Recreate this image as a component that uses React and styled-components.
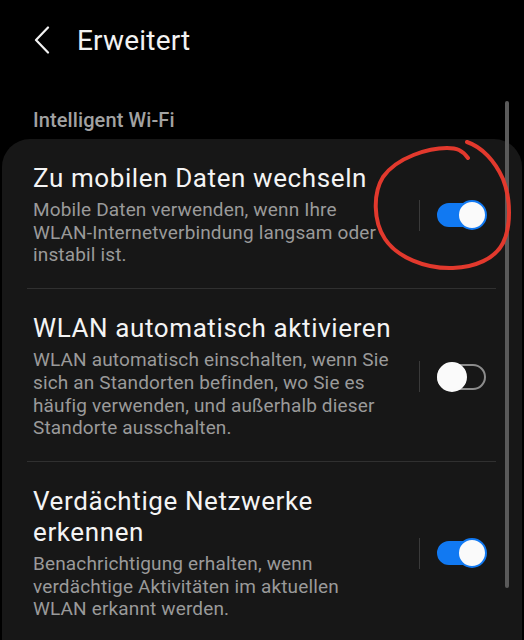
import styled, { createGlobalStyle } from "styled-components";

const GlobalStyle = createGlobalStyle`
  html, body {
    margin: 0;
    padding: 0;
    background: #000;
  }
  body {
    font-family: Roboto, "Noto Sans", "Liberation Sans", sans-serif;
    -webkit-font-smoothing: antialiased;
  }
`;

// lines are kept as they wrap on the device
const settings = [
  {
    id: "mobile",
    title: ["Zu mobilen Daten wechseln"],
    text: [
      "Mobile Daten verwenden, wenn Ihre",
      "WLAN-Internetverbindung langsam oder",
      "instabil ist.",
    ],
    on: true,
  },
  {
    id: "auto",
    title: ["WLAN automatisch aktivieren"],
    text: [
      "WLAN automatisch einschalten, wenn Sie",
      "sich an Standorten befinden, wo Sie es",
      "häufig verwenden, und außerhalb dieser",
      "Standorte ausschalten.",
    ],
    on: false,
  },
  {
    id: "suspicious",
    title: ["Verdächtige Netzwerke", "erkennen"],
    text: [
      "Benachrichtigung erhalten, wenn",
      "verdächtige Aktivitäten im aktuellen",
      "WLAN erkannt werden.",
    ],
    on: true,
  },
];

const Toggle = ({ on }) => (
  <Switch>
    <Track $on={on} />
    <Knob $on={on} />
  </Switch>
);

const App = () => {
  return (
    <>
      <GlobalStyle />
      <Screen>
        <Header>
          <BackButton>
            <svg width="16" height="28" viewBox="0 0 16 28">
              <path d="M14 1.5 L2 14 L14 26.5" fill="none" stroke="#f2f2f2" strokeWidth="2.2" strokeLinecap="round" strokeLinejoin="round" />
            </svg>
          </BackButton>
          <Title>Erweitert</Title>
        </Header>

        <SectionLabel>Intelligent Wi-Fi</SectionLabel>

        <Card>
          {settings.map((item, i) => (
            <div key={item.id}>
              <Row>
                <TextBlock>
                  <ItemTitle>
                    {item.title.map((l) => (
                      <Line key={l}>{l}</Line>
                    ))}
                  </ItemTitle>
                  <ItemText>
                    {item.text.map((l) => (
                      <Line key={l}>{l}</Line>
                    ))}
                  </ItemText>
                </TextBlock>
                <Separator />
                <Toggle on={item.on} />
              </Row>
              {i < settings.length - 1 && <Divider />}
            </div>
          ))}
        </Card>

        <Scrollbar />

        <Scribble width="150" height="140" viewBox="0 0 150 140">
          <path
            d="M101 19 C95 11 90 9 80 9 C62 9 30 18 16 38 C6 54 6 82 18 100 C30 118 58 130 86 129 C108 128 128 120 136 104 C144 88 144 60 136 40 C128 22 115 8 100 3"
            fill="none"
            stroke="#e2392d"
            strokeWidth="4"
            strokeLinecap="round"
            strokeLinejoin="round"
          />
        </Scribble>
      </Screen>
    </>
  );
};

const Screen = styled.div`
  position: relative;
  width: 524px;
  height: 640px;
  overflow: hidden;
  background: #000;
`;

const Header = styled.header`
  display: flex;
  align-items: center;
  height: 80px;
  padding-left: 34px;
`;

const BackButton = styled.div`
  display: flex;
  align-items: center;
  width: 43px;
`;

const Title = styled.h1`
  margin: 0;
  font-size: 28px;
  font-weight: 400;
  color: #f2f2f2;
  letter-spacing: 0.2px;
`;

const SectionLabel = styled.div`
  box-sizing: border-box;
  height: 59px;
  padding: 28px 33px 0;
  font-size: 20px;
  font-weight: 500;
  letter-spacing: 0.1px;
  color: #a2a2a2;
`;

const Card = styled.section`
  margin: 0 2px;
  background: #171717;
  border-radius: 28px 28px 0 0;
  min-height: 520px;
`;

const Row = styled.div`
  display: flex;
  align-items: center;
  padding: 24px 0 21px 31px;
`;

const TextBlock = styled.div`
  width: 372px;
`;

const Line = styled.span`
  display: block;
  white-space: nowrap;
`;

const ItemTitle = styled.div`
  font-size: 26px;
  line-height: 31px;
  letter-spacing: 0.6px;
  color: #f4f4f4;
  margin-bottom: 5px;
`;

const ItemText = styled.div`
  font-size: 19px;
  line-height: 22.7px;
  letter-spacing: 0.15px;
  color: #9a9a9a;
`;

const Separator = styled.div`
  width: 1px;
  height: 31px;
  margin-left: 14px;
  background: #3a3a3a;
`;

const Switch = styled.div`
  position: relative;
  width: 50px;
  height: 30px;
  margin-left: 17px;
`;

const Track = styled.div`
  position: absolute;
  left: 0;
  top: 2px;
  width: 45px;
  height: 22px;
  border-radius: 14px;
  background: ${(p) => (p.$on ? "#1179f2" : "transparent")};
  border: 2px solid ${(p) => (p.$on ? "#1179f2" : "#8c8c8c")};
  ${(p) => p.$on && "top: 3px; width: 44px; height: 20px;"}
`;

const Knob = styled.div`
  position: absolute;
  top: 0;
  left: ${(p) => (p.$on ? "20px" : "0")};
  width: 26px;
  height: 26px;
  border-radius: 50%;
  background: #fafafa;
  border: 2px solid ${(p) => (p.$on ? "#1179f2" : "#fafafa")};
`;

const Divider = styled.div`
  height: 1px;
  margin: 0 26px 0 25px;
  background: #303030;
`;

const Scrollbar = styled.div`
  position: absolute;
  left: 505px;
  top: 101px;
  width: 4px;
  height: 487px;
  border-radius: 2px;
  background: #5a5a5a;
`;

const Scribble = styled.svg`
  position: absolute;
  left: 367px;
  top: 139px;
`;

export default App;
